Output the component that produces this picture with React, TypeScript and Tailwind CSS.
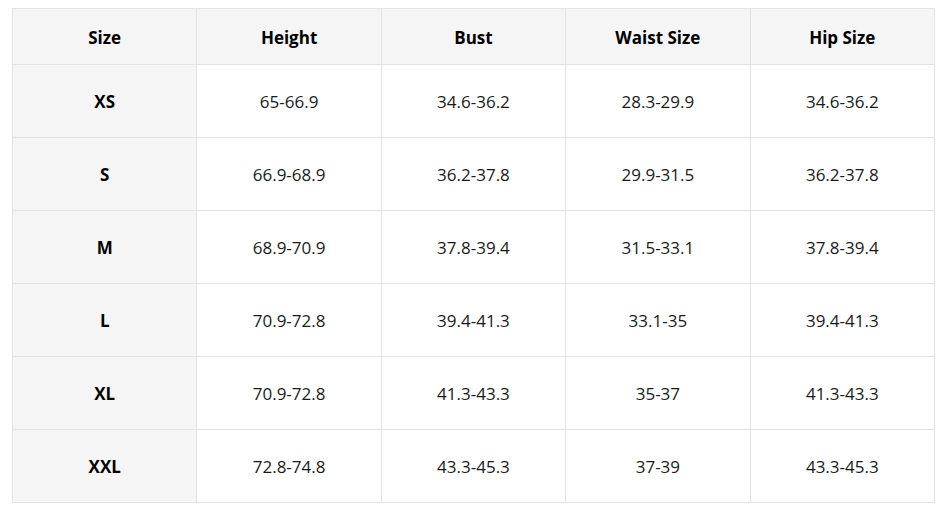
const headers = ["Size", "Height", "Bust", "Waist Size", "Hip Size"];

const rows = [
  ["XS", "65-66.9", "34.6-36.2", "28.3-29.9", "34.6-36.2"],
  ["S", "66.9-68.9", "36.2-37.8", "29.9-31.5", "36.2-37.8"],
  ["M", "68.9-70.9", "37.8-39.4", "31.5-33.1", "37.8-39.4"],
  ["L", "70.9-72.8", "39.4-41.3", "33.1-35", "39.4-41.3"],
  ["XL", "70.9-72.8", "41.3-43.3", "35-37", "41.3-43.3"],
  ["XXL", "72.8-74.8", "43.3-45.3", "37-39", "43.3-45.3"],
];

export default function App() {
  return (
    <div className="min-h-screen bg-white pt-[8px] pl-[12px] font-['Open_Sans',sans-serif] text-[17px] text-[#1a1a1a]">
      <table className="w-[923px] table-fixed border-collapse">
        <thead>
          <tr className="h-[56px] bg-[#f5f5f5]">
            {headers.map((h) => (
              <th
                key={h}
                className="border border-[#e3e3e3] pt-[2px] text-center font-bold text-black"
              >
                {h}
              </th>
            ))}
          </tr>
        </thead>
        <tbody>
          {rows.map((row) => (
            <tr key={row[0]} className="h-[73px]">
              {row.map((cell, i) => (
                <td
                  key={i}
                  className={
                    i === 0
                      ? "border border-[#e3e3e3] bg-[#f5f5f5] pt-[2px] text-center font-bold text-black"
                      : "border border-[#e3e3e3] pt-[2px] text-center"
                  }
                >
                  {cell}
                </td>
              ))}
            </tr>
          ))}
        </tbody>
      </table>
    </div>
  );
}
